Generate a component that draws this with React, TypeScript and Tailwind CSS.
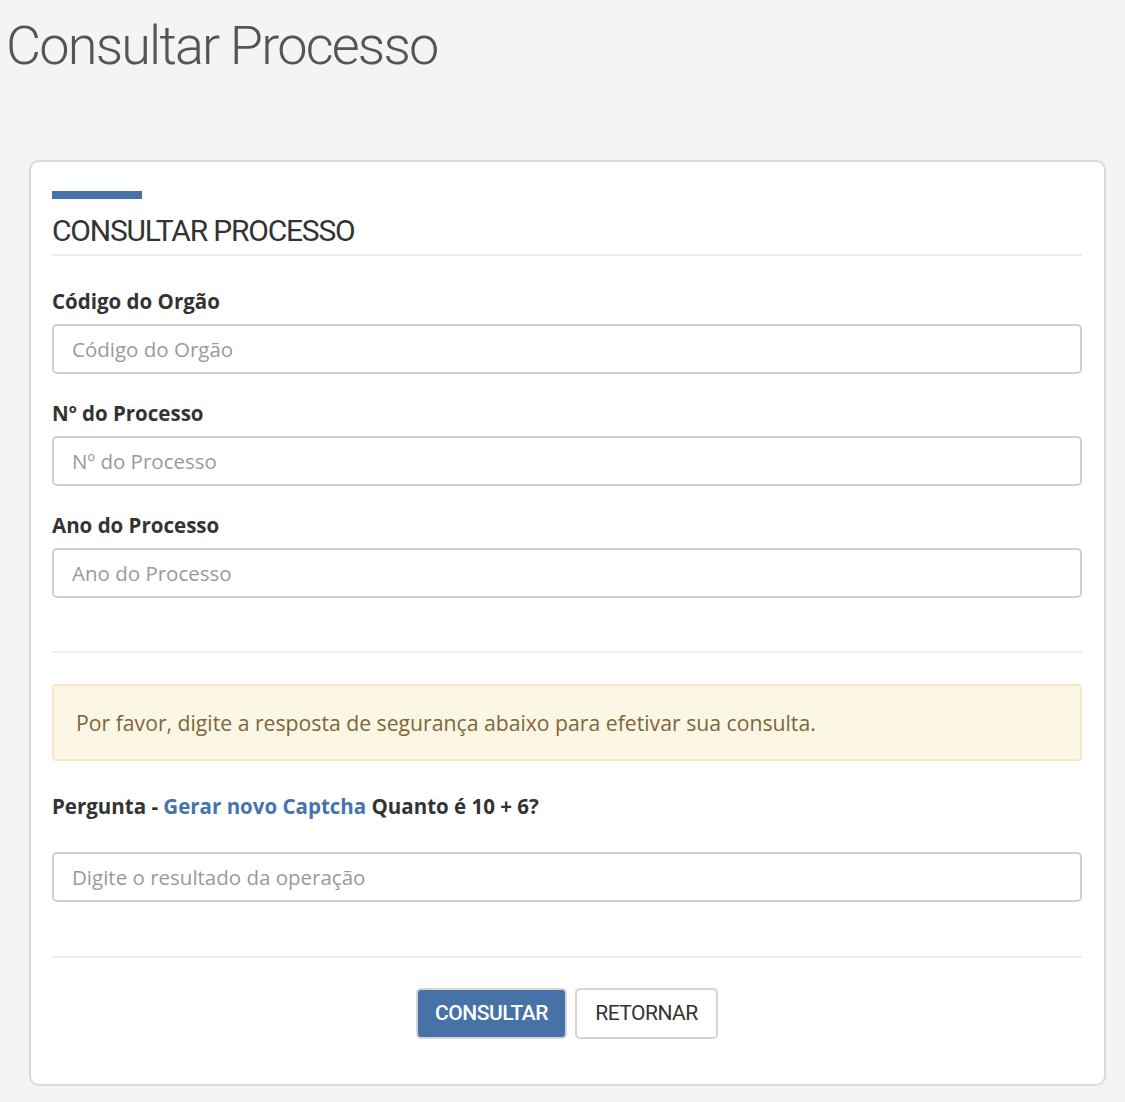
import React from "react";

const body = { fontFamily: '"Open Sans", "Noto Sans", sans-serif' };
const narrow = { fontFamily: '"Roboto", "Liberation Sans", sans-serif' };

interface FieldProps {
  label: string;
  placeholder: string;
}

const Field: React.FC<FieldProps> = ({ label, placeholder }) => (
  <div className="flex flex-col">
    <label className="text-[20.5px] leading-[24px] font-bold text-[#333] mb-[11px]">{label}</label>
    <input
      placeholder={placeholder}
      className="h-[50px] w-full rounded-[5px] border-2 border-[#cfcfcf] bg-white px-[18px] text-[20.5px] text-[#333] placeholder:text-[#9a9a9a] outline-none"
    />
  </div>
);

export default function App() {
  return (
    <div className="min-h-[1102px] bg-[#f4f4f4] pb-[17px]" style={body}>
      {/* page title */}
      <h1
        className="pl-[6px] pt-[14px] text-[54px] leading-[64px] font-light tracking-[-1.8px] text-[#555]"
        style={narrow}
      >
        Consultar Processo
      </h1>

      <div className="ml-[29px] mt-[82px] w-[1077px] rounded-[10px] border-2 border-[#d9d9d9] bg-white pl-[21px] pr-[22px] pt-[29px] pb-[45px]">
        <div className="h-[8px] w-[90px] bg-[#4672a8]" />
        <h2
          className="mt-[14px] pb-[5px] text-[30px] leading-[36px] tracking-[-1.2px] text-[#333] border-b-2 border-[#eeeef2]"
          style={narrow}
        >
          CONSULTAR PROCESSO
        </h2>

        <div className="mt-[33px] flex flex-col gap-[27px]">
          <Field label="Código do Orgão" placeholder="Código do Orgão" />
          <Field label="Nº do Processo" placeholder="Nº do Processo" />
          <Field label="Ano do Processo" placeholder="Ano do Processo" />
        </div>

        <div className="mt-[53px] border-t-2 border-[#eeeeee]" />

        <div className="mt-[31px] flex h-[77px] items-center rounded-[4px] border-2 border-[#f8e9c6] bg-[#fcf7e4] px-[22px] text-[21.2px] text-[#80663a]">
          Por favor, digite a resposta de segurança abaixo para efetivar sua consulta.
        </div>

        <p className="mt-[33px] text-[20.5px] leading-[24px] font-bold text-[#333]">
          Pergunta - <a href="#" className="text-[#4574ad]">Gerar novo Captcha</a> Quanto é 10 + 6?
        </p>

        <input
          placeholder="Digite o resultado da operação"
          className="mt-[34px] h-[50px] w-full rounded-[5px] border-2 border-[#cfcfcf] bg-white px-[18px] text-[20.5px] text-[#333] placeholder:text-[#9a9a9a] outline-none"
        />

        <div className="mt-[54px] border-t-2 border-[#eeeeee]" />

        <div className="mt-[30px] flex justify-center gap-[8px]">
          <button
            className="h-[51px] w-[151px] rounded-[5px] border-2 border-[#d5d5d5] bg-[#4672a8] text-[21px] font-medium tracking-[-0.5px] text-white"
            style={narrow}
          >
            CONSULTAR
          </button>
          <button
            className="h-[51px] w-[143px] rounded-[5px] border-2 border-[#d5d5d5] bg-white text-[21px] tracking-[-0.5px] text-[#333]"
            style={narrow}
          >
            RETORNAR
          </button>
        </div>
      </div>
    </div>
  );
}
